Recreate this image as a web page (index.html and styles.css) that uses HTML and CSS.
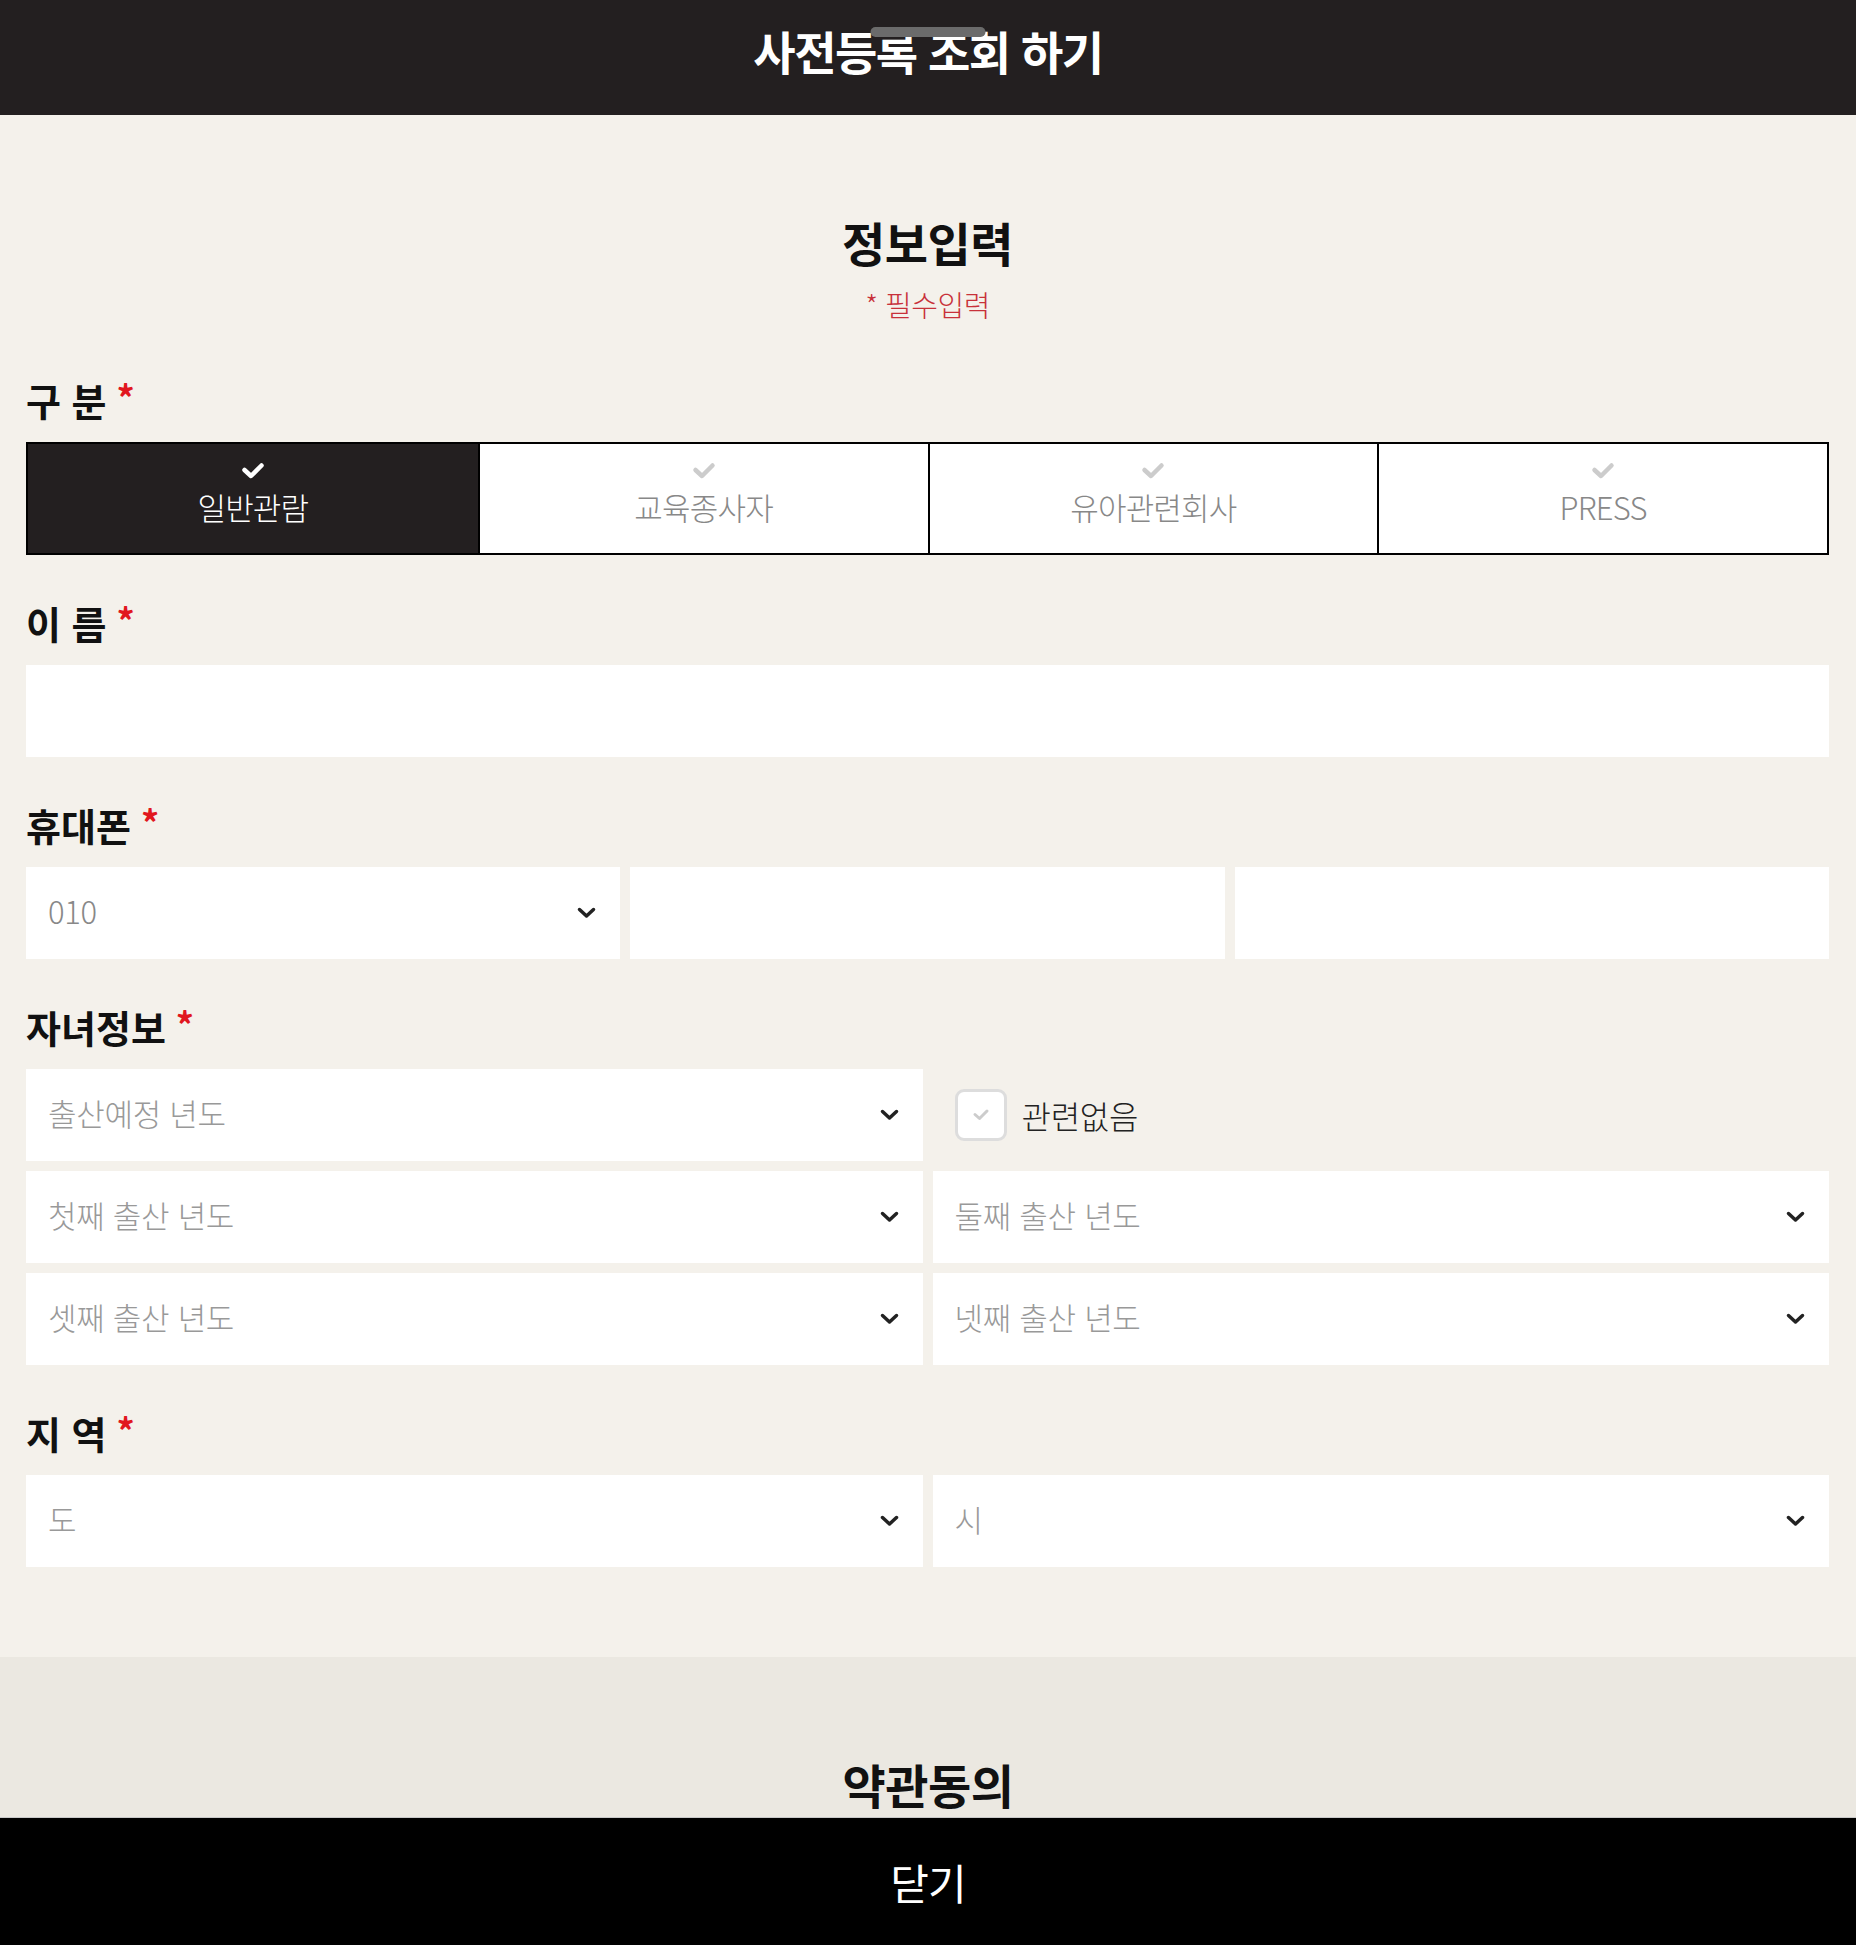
FILE: index.html
```html
<!DOCTYPE html>
<html lang="ko">
<head>
    <meta charset="UTF-8">
    <meta name="viewport" content="width=device-width, initial-scale=1.0">
    <title>사전등록 조회 하기</title>
    <link rel="stylesheet" href="styles.css">
</head>
<body>
    <div class="page">
        <header class="top-bar">
            <span class="handle"></span>
            <h1>사전등록 조회 하기</h1>
        </header>

        <div class="content">
            <section class="info">
                <div class="info-head">
                    <h2 class="section-title">정보입력</h2>
                    <p class="required-note">* 필수입력</p>
                </div>

                <div class="field first">
                    <div class="field-label">구 분<span class="star">*</span></div>
                    <div class="type-tabs">
                        <div class="type-tab active">
                            <svg class="tab-check" width="24" height="18" viewBox="0 0 24 18"><path d="M3.5 8 L10 14 L20.5 3.5" /></svg>
                            <span>일반관람</span>
                        </div>
                        <div class="type-tab">
                            <svg class="tab-check" width="24" height="18" viewBox="0 0 24 18"><path d="M3.5 8 L10 14 L20.5 3.5" /></svg>
                            <span>교육종사자</span>
                        </div>
                        <div class="type-tab">
                            <svg class="tab-check" width="24" height="18" viewBox="0 0 24 18"><path d="M3.5 8 L10 14 L20.5 3.5" /></svg>
                            <span>유아관련회사</span>
                        </div>
                        <div class="type-tab">
                            <svg class="tab-check" width="24" height="18" viewBox="0 0 24 18"><path d="M3.5 8 L10 14 L20.5 3.5" /></svg>
                            <span>PRESS</span>
                        </div>
                    </div>
                </div>

                <div class="field">
                    <div class="field-label">이 름<span class="star">*</span></div>
                    <div class="box"></div>
                </div>

                <div class="field">
                    <div class="field-label">휴대폰<span class="star">*</span></div>
                    <div class="phone-row">
                        <div class="box select">
                            <span>010</span>
                            <svg class="chevron" width="19" height="12" viewBox="0 0 19 12"><path d="M2.5 2.5 L9.5 9 L16.5 2.5" /></svg>
                        </div>
                        <div class="box"></div>
                        <div class="box"></div>
                    </div>
                </div>

                <div class="field">
                    <div class="field-label">자녀정보<span class="star">*</span></div>
                    <div class="two-col">
                        <div class="box select">
                            <span>출산예정 년도</span>
                            <svg class="chevron" width="19" height="12" viewBox="0 0 19 12"><path d="M2.5 2.5 L9.5 9 L16.5 2.5" /></svg>
                        </div>
                        <label class="none-check">
                            <span class="check-box">
                                <svg width="18" height="14" viewBox="0 0 18 14"><path d="M3 6.5 L7.5 10.5 L15 3" /></svg>
                            </span>
                            <span>관련없음</span>
                        </label>
                        <div class="box select">
                            <span>첫째 출산 년도</span>
                            <svg class="chevron" width="19" height="12" viewBox="0 0 19 12"><path d="M2.5 2.5 L9.5 9 L16.5 2.5" /></svg>
                        </div>
                        <div class="box select">
                            <span>둘째 출산 년도</span>
                            <svg class="chevron" width="19" height="12" viewBox="0 0 19 12"><path d="M2.5 2.5 L9.5 9 L16.5 2.5" /></svg>
                        </div>
                        <div class="box select">
                            <span>셋째 출산 년도</span>
                            <svg class="chevron" width="19" height="12" viewBox="0 0 19 12"><path d="M2.5 2.5 L9.5 9 L16.5 2.5" /></svg>
                        </div>
                        <div class="box select">
                            <span>넷째 출산 년도</span>
                            <svg class="chevron" width="19" height="12" viewBox="0 0 19 12"><path d="M2.5 2.5 L9.5 9 L16.5 2.5" /></svg>
                        </div>
                    </div>
                </div>

                <div class="field">
                    <div class="field-label">지 역<span class="star">*</span></div>
                    <div class="two-col">
                        <div class="box select">
                            <span>도</span>
                            <svg class="chevron" width="19" height="12" viewBox="0 0 19 12"><path d="M2.5 2.5 L9.5 9 L16.5 2.5" /></svg>
                        </div>
                        <div class="box select">
                            <span>시</span>
                            <svg class="chevron" width="19" height="12" viewBox="0 0 19 12"><path d="M2.5 2.5 L9.5 9 L16.5 2.5" /></svg>
                        </div>
                    </div>
                </div>
            </section>

            <section class="terms">
                <h2 class="section-title">약관동의</h2>
            </section>
        </div>

        <footer class="bottom-bar">닫기</footer>
    </div>
</body>
</html>
```

FILE: styles.css
```css
body {
    margin: 0;
    font-family: "Noto Sans CJK KR", "Noto Sans", sans-serif;
    color: #222;
    background: #f4f1eb;
}

.page {
    height: 100vh;
    display: flex;
    flex-direction: column;
    overflow: hidden;
}

/* top title bar */
.top-bar {
    position: relative;
    height: 115px;
    flex-shrink: 0;
    background: #231f20;
    display: flex;
    justify-content: center;
    box-sizing: border-box;
    padding-top: 22px;
}

.top-bar h1 {
    margin: 0;
    color: #fff;
    font-size: 46px;
    font-weight: 700;
    line-height: 56px;
    letter-spacing: -1.5px;
}

.handle {
    position: absolute;
    top: 27px;
    left: 50%;
    transform: translateX(-50%);
    width: 115px;
    height: 10px;
    border-radius: 5px;
    background: #6b6b6b;
    z-index: 1;
}

.content {
    flex: 1;
    display: flex;
    flex-direction: column;
    overflow: hidden;
}

.info {
    padding: 99px 27px 90px 26px;
}

.info-head {
    text-align: center;
}

.section-title {
    margin: 0;
    font-size: 47px;
    font-weight: 700;
    line-height: 56px;
    letter-spacing: -0.5px;
    color: #111;
    text-align: center;
}

.required-note {
    margin: 16px 0 0;
    font-size: 29px;
    font-weight: 300;
    line-height: 36px;
    letter-spacing: -0.5px;
    color: #c8313a;
}

.field {
    margin-top: 46px;
}

.field.first {
    margin-top: 56px;
}

.field-label {
    font-size: 38px;
    font-weight: 700;
    line-height: 44px;
    letter-spacing: 0;
    color: #111;
    margin-bottom: 20px;
}

.star {
    color: #e1171e;
    font-size: 36px;
    vertical-align: top;
    margin-left: 10px;
    line-height: 36px;
}

/* visitor type tabs */
.type-tabs {
    display: grid;
    grid-template-columns: repeat(4, 1fr);
    height: 113px;
    box-sizing: border-box;
    border: 2px solid #000;
    background: #fff;
}

.type-tab {
    display: flex;
    flex-direction: column;
    align-items: center;
    justify-content: center;
    gap: 9px;
    padding-bottom: 10px;
    border-left: 2px solid #000;
    font-size: 31px;
    font-weight: 300;
    line-height: 36px;
    letter-spacing: -0.8px;
    color: #888;
}

.type-tab:first-child {
    border-left: none;
}

.type-tab.active {
    background: #231f20;
    color: #fff;
}

.tab-check path {
    fill: none;
    stroke: #ccc;
    stroke-width: 4.5;
    stroke-linecap: round;
    stroke-linejoin: round;
}

.type-tab.active .tab-check path {
    stroke: #fff;
}

/* inputs and selects */
.box {
    height: 92px;
    background: #fff;
}

.select {
    display: flex;
    align-items: center;
    justify-content: space-between;
    box-sizing: border-box;
    padding: 0 24px 5px 22px;
    font-size: 31px;
    font-weight: 300;
    letter-spacing: -0.3px;
    color: #999;
}

.chevron {
    margin-top: 5px;
}

.chevron path {
    fill: none;
    stroke: #222;
    stroke-width: 3.5;
    stroke-linecap: round;
    stroke-linejoin: round;
}

.phone-row {
    display: grid;
    grid-template-columns: repeat(3, 1fr);
    gap: 10px;
}

.phone-row .select {
    color: #888;
}

.two-col {
    display: grid;
    grid-template-columns: 1fr 1fr;
    column-gap: 10px;
    row-gap: 10px;
}

.none-check {
    display: flex;
    align-items: center;
    padding-left: 22px;
    font-size: 32px;
    font-weight: 300;
    letter-spacing: -0.3px;
    color: #222;
}

.check-box {
    width: 52px;
    height: 52px;
    box-sizing: border-box;
    border: 3px solid #ddd;
    border-radius: 9px;
    background: #fff;
    display: flex;
    align-items: center;
    justify-content: center;
    margin-right: 15px;
}

.check-box path {
    fill: none;
    stroke: #ccc;
    stroke-width: 3;
    stroke-linecap: round;
    stroke-linejoin: round;
}

/* terms */
.terms {
    flex: 1;
    background: #ebe8e1;
    padding-top: 99px;
}

/* bottom close bar */
.bottom-bar {
    height: 128px;
    flex-shrink: 0;
    box-sizing: border-box;
    border-top: 1px solid #c9c9c9;
    background: #000;
    color: #fff;
    display: flex;
    align-items: center;
    justify-content: center;
    font-size: 42px;
    font-weight: 400;
    letter-spacing: -1px;
}
```
